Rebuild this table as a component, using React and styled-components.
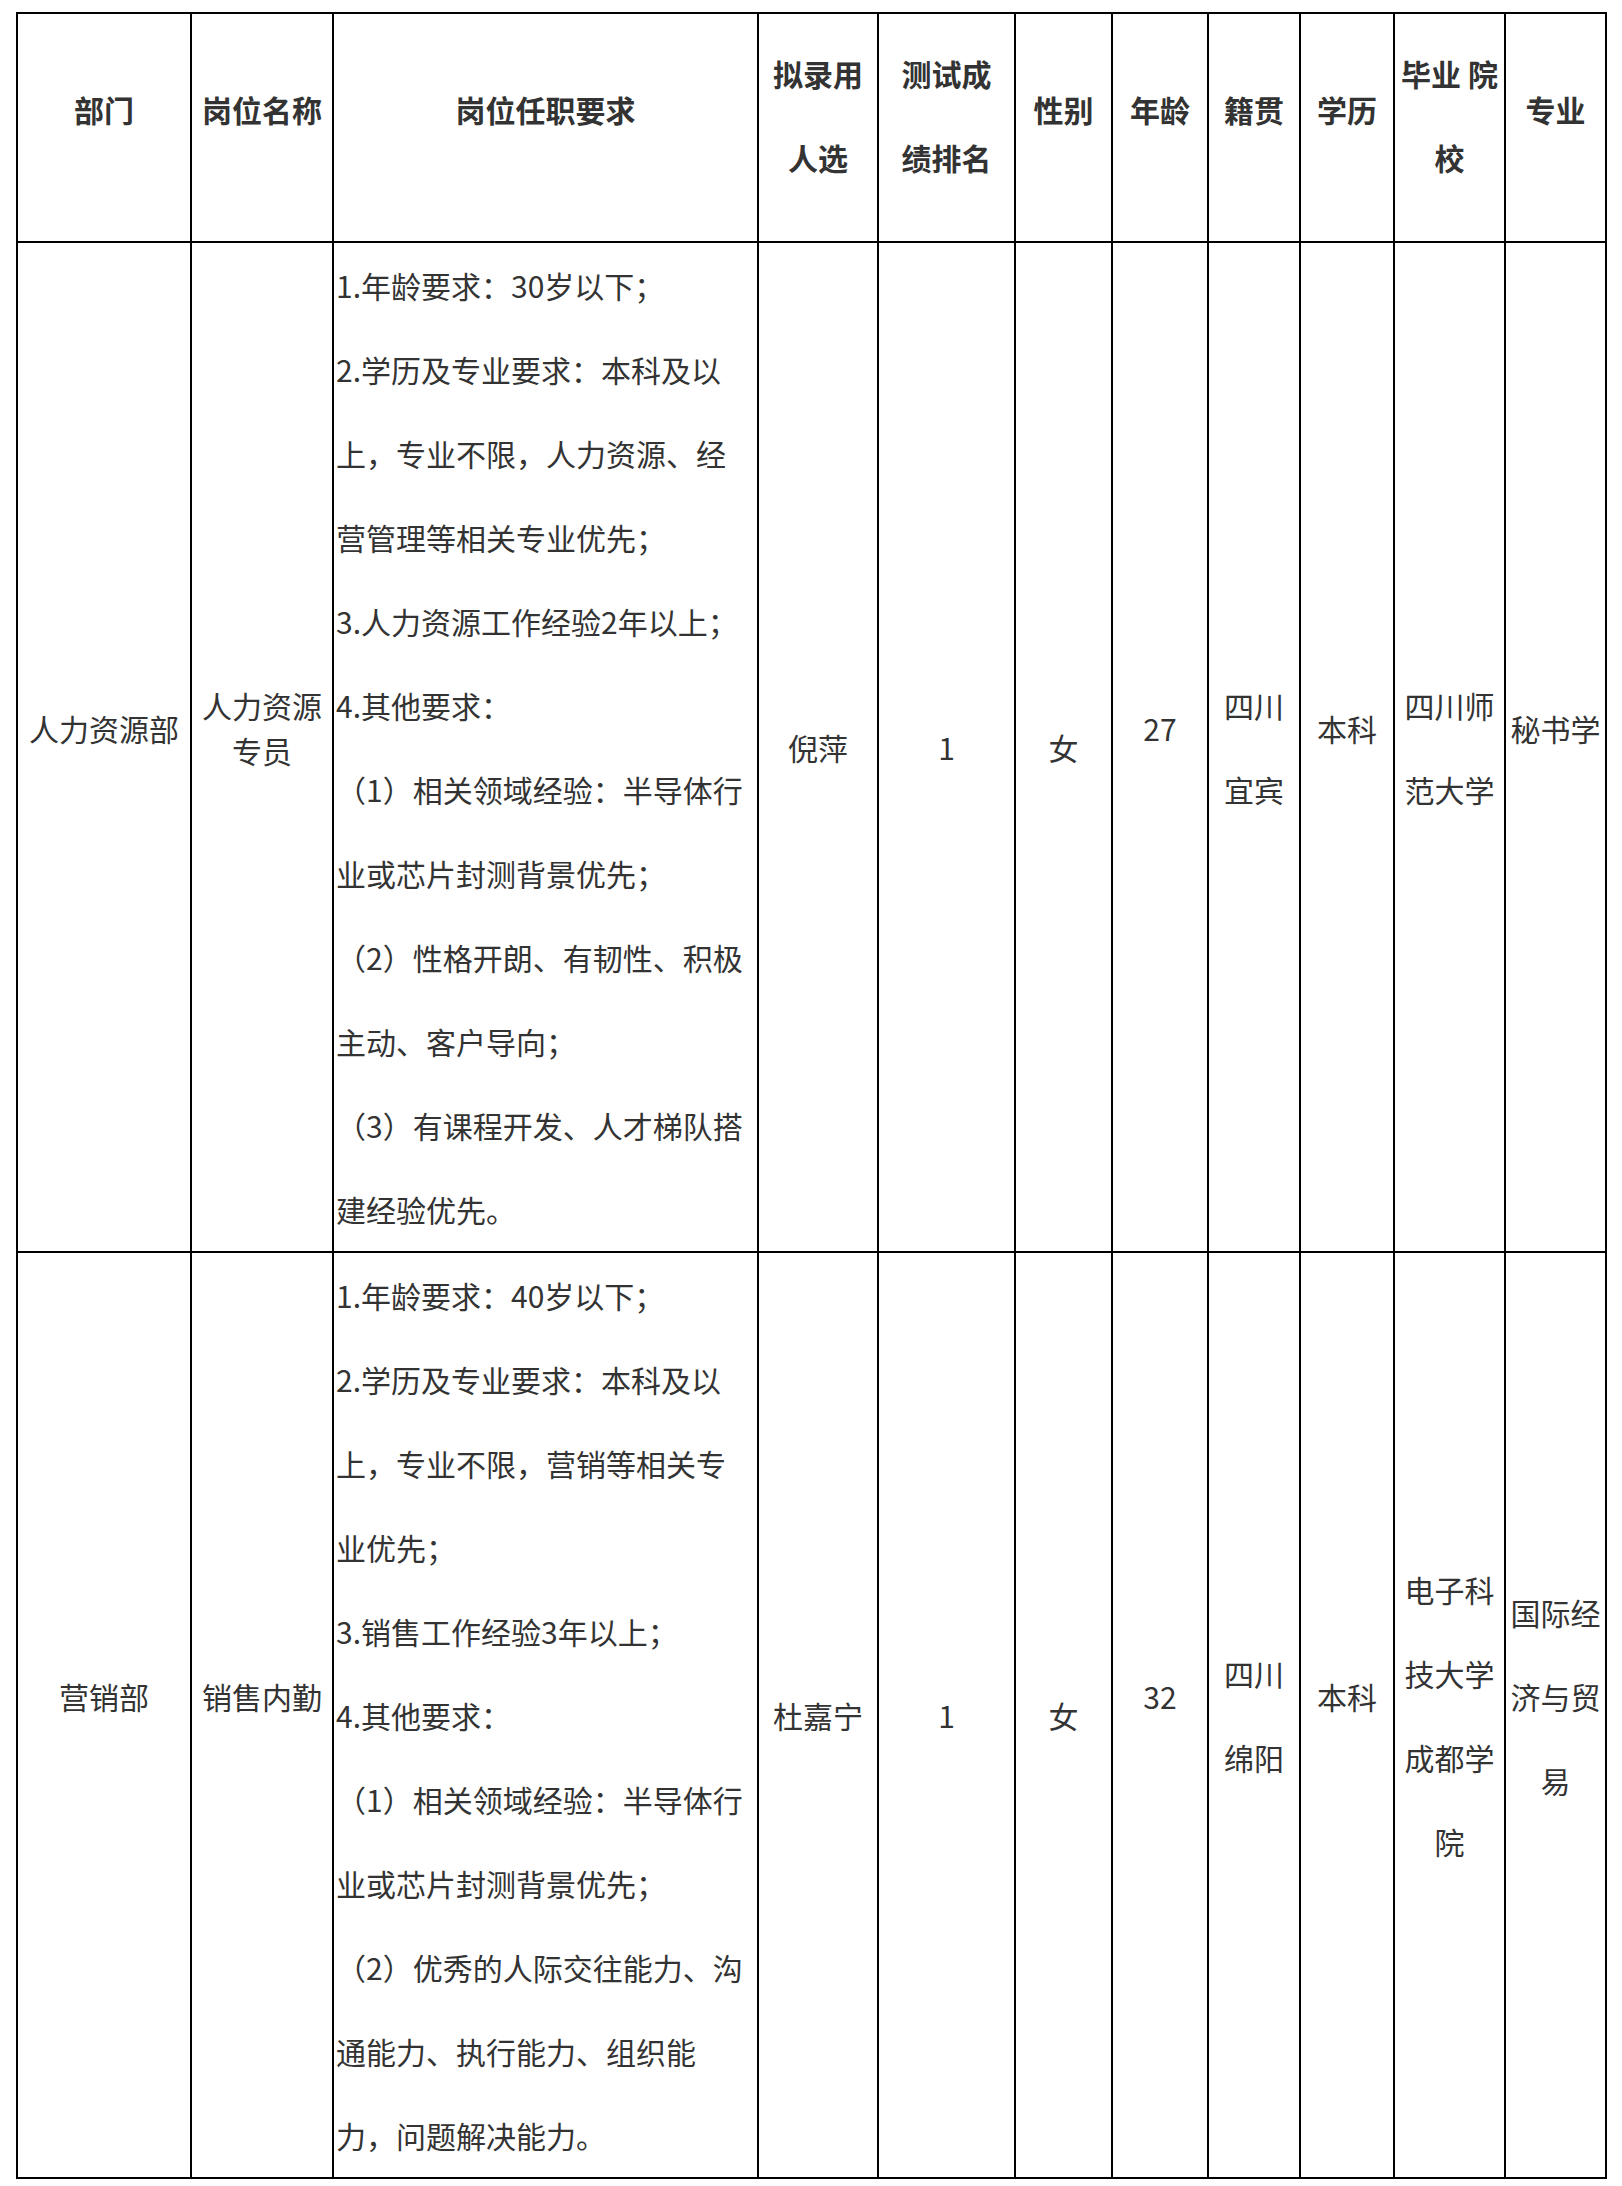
import styled, { createGlobalStyle } from 'styled-components'

const GlobalStyle = createGlobalStyle`
  html, body {
    margin: 0;
    padding: 0;
    background: #fff;
  }
  body {
    font-family: 'Noto Sans CJK SC', 'Noto Sans', sans-serif;
    color: #333;
  }
`

const Sheet = styled.table`
  border-collapse: collapse;
  table-layout: fixed;
  width: 1591px;
  margin: 12px 0 0 16px;
  font-size: 30px;
`

const HeadCell = styled.th`
  height: ${(p) => (p.$single ? '190px' : '202px')};
  padding: 0 0 ${(p) => (p.$single ? '37px' : '25px')};
  border: 2px solid #000;
  font-weight: 700;
  color: #333;
  line-height: 84px;
  text-align: center;
  vertical-align: middle;
  white-space: nowrap;
`

const Cell = styled.td`
  padding: ${(p) => (p.$lift ? '0 0 38px' : '0')};
  border: 2px solid #000;
  line-height: ${(p) => (p.$tight ? '45px' : '84px')};
  text-align: center;
  vertical-align: middle;
  white-space: nowrap;
`

const ReqCell = styled.td`
  padding: 0 0 0 2px;
  border: 2px solid #000;
  line-height: 84px;
  text-align: left;
  vertical-align: middle;
  white-space: nowrap;
`

const Line = styled.div`
  display: block;
`

const widths = [174, 142, 425, 120, 137, 97, 96, 92, 94, 111, 101]

const headers = [
  ['部门'],
  ['岗位名称'],
  ['岗位任职要求'],
  ['拟录用', '人选'],
  ['测试成', '绩排名'],
  ['性别'],
  ['年龄'],
  ['籍贯'],
  ['学历'],
  ['毕业 院', '校'],
  ['专业'],
]

const rows = [
  {
    dept: ['人力资源部'],
    post: ['人力资源', '专员'],
    reqs: [
      '1.年龄要求：30岁以下；',
      '2.学历及专业要求：本科及以',
      '上，专业不限，人力资源、经',
      '营管理等相关专业优先；',
      '3.人力资源工作经验2年以上；',
      '4.其他要求：',
      '（1）相关领域经验：半导体行',
      '业或芯片封测背景优先；',
      '（2）性格开朗、有韧性、积极',
      '主动、客户导向；',
      '（3）有课程开发、人才梯队搭',
      '建经验优先。',
    ],
    name: ['倪萍'],
    rank: ['1'],
    sex: ['女'],
    age: ['27'],
    origin: ['四川', '宜宾'],
    edu: ['本科'],
    school: ['四川师', '范大学'],
    major: ['秘书学'],
  },
  {
    dept: ['营销部'],
    post: ['销售内勤'],
    reqs: [
      '1.年龄要求：40岁以下；',
      '2.学历及专业要求：本科及以',
      '上，专业不限，营销等相关专',
      '业优先；',
      '3.销售工作经验3年以上；',
      '4.其他要求：',
      '（1）相关领域经验：半导体行',
      '业或芯片封测背景优先；',
      '（2）优秀的人际交往能力、沟',
      '通能力、执行能力、组织能',
      '力，问题解决能力。',
    ],
    name: ['杜嘉宁'],
    rank: ['1'],
    sex: ['女'],
    age: ['32'],
    origin: ['四川', '绵阳'],
    edu: ['本科'],
    school: ['电子科', '技大学', '成都学', '院'],
    major: ['国际经', '济与贸', '易'],
  },
]

function Lines({ items }) {
  return items.map((t, i) => <Line key={i}>{t}</Line>)
}

export default function App() {
  return (
    <>
      <GlobalStyle />
      <Sheet>
        <colgroup>
          {widths.map((w, i) => (
            <col key={i} style={{ width: w }} />
          ))}
        </colgroup>
        <thead>
          <tr>
            {headers.map((h, i) => (
              <HeadCell key={i} $single={h.length === 1}>
                <Lines items={h} />
              </HeadCell>
            ))}
          </tr>
        </thead>
        <tbody>
          {rows.map((r, i) => (
            <tr key={i}>
              <Cell $lift><Lines items={r.dept} /></Cell>
              <Cell $lift $tight={r.post.length > 1}><Lines items={r.post} /></Cell>
              <ReqCell><Lines items={r.reqs} /></ReqCell>
              <Cell><Lines items={r.name} /></Cell>
              <Cell><Lines items={r.rank} /></Cell>
              <Cell><Lines items={r.sex} /></Cell>
              <Cell $lift><Lines items={r.age} /></Cell>
              <Cell><Lines items={r.origin} /></Cell>
              <Cell $lift><Lines items={r.edu} /></Cell>
              <Cell><Lines items={r.school} /></Cell>
              <Cell $lift><Lines items={r.major} /></Cell>
            </tr>
          ))}
        </tbody>
      </Sheet>
    </>
  )
}
